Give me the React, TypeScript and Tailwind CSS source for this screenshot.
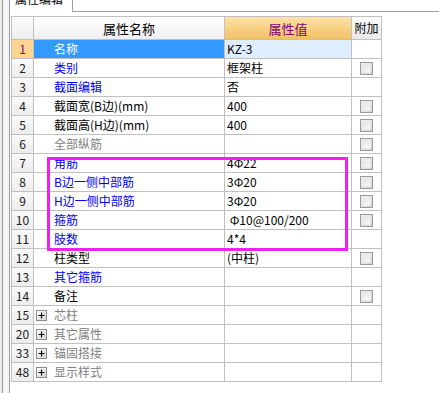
import React from 'react'

type Row = {
  n: string
  name: string
  val: string
  tone: 'sel' | 'blue' | 'black' | 'gray'
  check: boolean
}

const rows: Row[] = [
  { n: '1', name: '名称', val: 'KZ-3', tone: 'sel', check: false },
  { n: '2', name: '类别', val: '框架柱', tone: 'blue', check: true },
  { n: '3', name: '截面编辑', val: '否', tone: 'blue', check: false },
  { n: '4', name: '截面宽(B边)(mm)', val: '400', tone: 'black', check: true },
  { n: '5', name: '截面高(H边)(mm)', val: '400', tone: 'black', check: true },
  { n: '6', name: '全部纵筋', val: '', tone: 'gray', check: true },
  { n: '7', name: '角筋', val: '4Φ22', tone: 'blue', check: true },
  { n: '8', name: 'B边一侧中部筋', val: '3Φ20', tone: 'blue', check: true },
  { n: '9', name: 'H边一侧中部筋', val: '3Φ20', tone: 'blue', check: true },
  { n: '10', name: '箍筋', val: ' Φ10@100/200', tone: 'blue', check: true },
  { n: '11', name: '肢数', val: '4*4', tone: 'blue', check: false },
  { n: '12', name: '柱类型', val: '(中柱)', tone: 'black', check: true },
  { n: '13', name: '其它箍筋', val: '', tone: 'blue', check: false },
  { n: '14', name: '备注', val: '', tone: 'black', check: true },
]

const groups = [
  { n: '15', name: '芯柱' },
  { n: '20', name: '其它属性' },
  { n: '33', name: '锚固搭接' },
  { n: '48', name: '显示样式' },
]

const toneClass = {
  sel: 'bg-[#3399ff] text-white',
  blue: 'text-[#0000ff]',
  black: 'text-black',
  gray: 'text-[#808080]',
}

const grid = 'grid grid-cols-[22px_191px_127px_30px]'
const cell = 'border-r border-b border-[#c0c0c0] flex items-center'
const numCell = `${cell} justify-center bg-gradient-to-b from-[#fafafa] to-[#ececec] text-[#202020]`

function CheckBox() {
  return (
    <div className="ml-[8px] w-[13px] h-[13px] border border-[#9a9a9a] bg-gradient-to-br from-[#f4f4f4] to-[#d2d2d2] p-[1px]">
      <div className="w-full h-full border border-[#e8e8e8] bg-gradient-to-br from-[#e6e6e6] to-[#f8f8f8]" />
    </div>
  )
}

function Expander() {
  return (
    <svg width="11" height="11" viewBox="0 0 11 11" className="ml-[2px] shrink-0">
      <defs>
        <linearGradient id="exp" x1="0" y1="0" x2="1" y2="1">
          <stop offset="0" stopColor="#ffffff" />
          <stop offset="1" stopColor="#d4d4d4" />
        </linearGradient>
      </defs>
      <rect x="0.5" y="0.5" width="10" height="10" fill="url(#exp)" stroke="#8c8c8c" />
      <path d="M2.5 5.5h6M5.5 2.5v6" stroke="#000" strokeWidth="1.2" />
    </svg>
  )
}

export default function App() {
  return (
    <div
      className="relative w-[439px] h-[393px] overflow-hidden bg-white flex text-[12px] leading-none"
      style={{ fontFamily: '"Noto Sans CJK SC", "Noto Sans", sans-serif' }}
    >
      {/* Left frame */}
      <div className="flex h-full shrink-0">
        <div className="w-[2px] bg-[#ececec]" />
        <div className="w-[1px] bg-[#9a9a9a]" />
        <div className="w-[6px] bg-[#f4f4f4]" />
        <div className="w-[1px] bg-[#a0a0a0]" />
      </div>

      <div className="flex-1 flex flex-col">
        {/* Tab strip */}
        <div className="flex h-[12px] shrink-0">
          <div className="w-[63px] border-r border-[#a0a0a0] overflow-hidden pl-[5px]">
            <div className="-mt-[7px] text-[12px] text-black">属性编辑</div>
          </div>
          <div className="flex-1 border-b border-[#a0a0a0]" />
        </div>

        {/* Table */}
        <div className="mt-[4px] ml-[1px] w-[371px] border-l border-t border-[#c0c0c0]">
          <div className={`${grid} h-[23px]`}>
            <div className={`${cell} bg-gradient-to-b from-[#fbfbfb] to-[#ededed]`} />
            <div className={`${cell} justify-center bg-gradient-to-b from-[#ffffff] to-[#efefef] text-[13px] text-black`}>
              属性名称
            </div>
            <div className={`${cell} justify-center bg-gradient-to-b from-[#fde2a6] to-[#f2c062] text-[13px] text-[#800080]`}>
              属性值
            </div>
            <div className={`${cell} justify-center bg-gradient-to-b from-[#fbfbfb] to-[#eaeaea] text-[12px] text-black`}>
              附加
            </div>
          </div>

          {rows.map((r) => (
            <div key={r.n} className={`${grid} h-[19px]`}>
              <div
                className={
                  r.tone === 'sel'
                    ? `${cell} justify-center bg-[#fdd591] text-[#800080]`
                    : numCell
                }
              >
                {r.n}
              </div>
              <div className={`${cell} pl-[20px] whitespace-pre ${toneClass[r.tone]}`}>{r.name}</div>
              <div
                className={`${cell} pl-[2px] whitespace-pre text-black ${
                  r.tone === 'sel' ? 'bg-[#dfeeff]' : ''
                }`}
              >
                {r.val}
              </div>
              <div className={cell}>{r.check && <CheckBox />}</div>
            </div>
          ))}

          {groups.map((g) => (
            <div key={g.n} className={`${grid} h-[19px]`}>
              <div className={numCell}>{g.n}</div>
              <div className={`${cell} text-[#808080]`}>
                <Expander />
                <span className="ml-[7px]">{g.name}</span>
              </div>
              <div className={cell} />
              <div className={cell} />
            </div>
          ))}
        </div>
      </div>

      {/* Highlight box */}
      <div className="absolute left-[47px] top-[157px] w-[301px] h-[94px] border-[3px] border-[#f020f0] pointer-events-none" />
    </div>
  )
}
